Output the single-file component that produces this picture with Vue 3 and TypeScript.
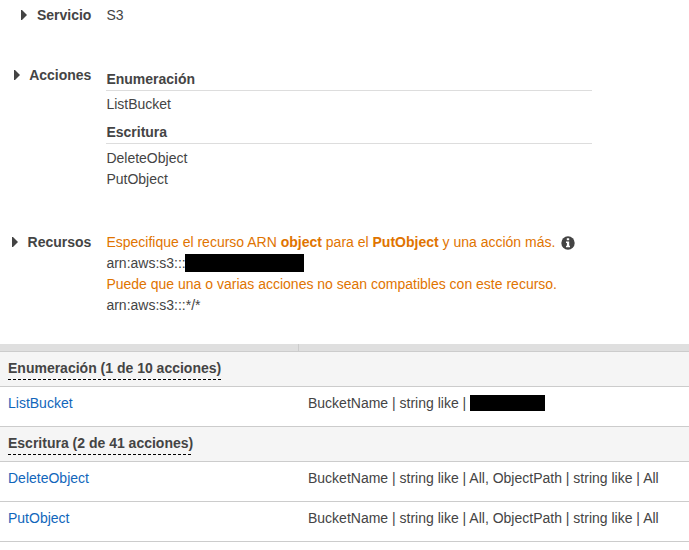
<script setup lang="ts">
interface Entry { name: string; condition: string; redacted?: boolean }
interface Group { title: string; entries: Entry[] }
const full = 'BucketName | string like | All, ObjectPath | string like | All'
const groups: Group[] = [
  { title: 'Enumeración (1 de 10 acciones)', entries: [{ name: 'ListBucket', condition: 'BucketName | string like |', redacted: true }] },
  { title: 'Escritura (2 de 41 acciones)', entries: [{ name: 'DeleteObject', condition: full }, { name: 'PutObject', condition: full }] },
]
</script>

<template>
  <main class="page">
    <section class="row service">
      <div class="label"><svg class="caret" viewBox="0 0 6 10"><path d="M0 0H1L6 5L1 10H0Z" /></svg><span>Servicio</span></div>
      <div>S3</div>
    </section>
    <section class="row actions">
      <div class="label"><svg class="caret" viewBox="0 0 6 10"><path d="M0 0H1L6 5L1 10H0Z" /></svg><span>Acciones</span></div>
      <div class="action-list">
        <h3>Enumeración</h3>
        <div>ListBucket</div>
        <h3 class="second">Escritura</h3>
        <div>DeleteObject</div>
        <div>PutObject</div>
      </div>
    </section>
    <section class="row resources">
      <div class="label"><svg class="caret" viewBox="0 0 6 10"><path d="M0 0H1L6 5L1 10H0Z" /></svg><span>Recursos</span></div>
      <div>
        <div class="warning line">
          <span>Especifique el recurso ARN <b>object</b> para el <b>PutObject</b> y una acción más.</span>
          <svg class="info" viewBox="0 0 14 14"><circle cx="7" cy="7" r="6.7" fill="#444" /><path d="M5.8 2.3h2.4v2H5.8zM5 5.5h3.2v4.3H9v1.5H5V9.8h.9V7H5z" fill="#fff" /></svg>
        </div>
        <div class="line">arn:aws:s3:::<span class="redaction arn"></span></div>
        <div class="warning">Puede que una o varias acciones no sean compatibles con este recurso.</div>
        <div>arn:aws:s3:::*/*</div>
      </div>
    </section>
    <div class="bar"><span></span></div>
    <section v-for="group in groups" :key="group.title">
      <div class="group"><span>{{ group.title }}</span></div>
      <div v-for="entry in group.entries" :key="entry.name" class="entry">
        <a>{{ entry.name }}</a>
        <div class="condition">{{ entry.condition }}<span v-if="entry.redacted" class="redaction bucket"></span></div>
      </div>
    </section>
  </main>
</template>

<style>
body { margin: 0; background: #fff; }
</style>
<style scoped>
.page { width: 689px; height: 550px; overflow: hidden; font: 14px/21px "Liberation Sans", Arial, sans-serif; color: #444; }
.row { display: grid; grid-template-columns: 91px 1fr; column-gap: 15.4px; white-space: nowrap; }
.service { padding-top: 5px; height: 60px; }
.actions { height: 167px; }
.resources { height: 112px; }
.label { display: flex; align-items: center; justify-content: flex-end; height: 21px; font-weight: bold; }
.label span { margin-right: -0.4px; }
.caret { width: 6px; height: 10px; margin-right: 10px; margin-bottom: 1px; fill: #444; }
.actions .caret { margin-right: 9px; }
.action-list { width: 485.6px; padding-top: 4px; }
h3 { margin: 0 0 3px; height: 21px; font-size: 14px; line-height: 21px; border-bottom: 1px solid #ddd; }
.second { margin-top: 7px; margin-bottom: 4px; }
.line { display: flex; align-items: center; height: 21px; }
.warning { color: #df7400; }
.info { width: 14px; height: 14px; margin-left: 6px; }
.redaction { background: #000; margin-bottom: 1px; }
.arn { width: 119px; height: 18px; margin-left: -0.7px; }
.bar { height: 7px; background: #dfdfdf; border-bottom: 1px solid #ccc; }
.bar span { display: block; width: 298px; height: 7px; border-right: 1px solid #ccc; }
.group { box-sizing: border-box; height: 35px; padding: 6px 8px; background: #f5f5f5; border-bottom: 1px solid #ccc; font-weight: bold; }
.group span { display: inline-block; height: 21px; background: repeating-linear-gradient(90deg, #000 0 3px, transparent 3px 5px) left bottom / 100% 1px no-repeat; padding-bottom: 1px; }
.entry { box-sizing: border-box; display: grid; grid-template-columns: 300px 1fr; align-items: start; height: 40px; padding: 6px 0 0 8px; border-bottom: 1px solid #ccc; }
.entry a { color: #1166bb; }
.condition { display: flex; align-items: center; white-space: nowrap; }
.bucket { width: 75px; height: 16px; margin-left: 4px; }
</style>
